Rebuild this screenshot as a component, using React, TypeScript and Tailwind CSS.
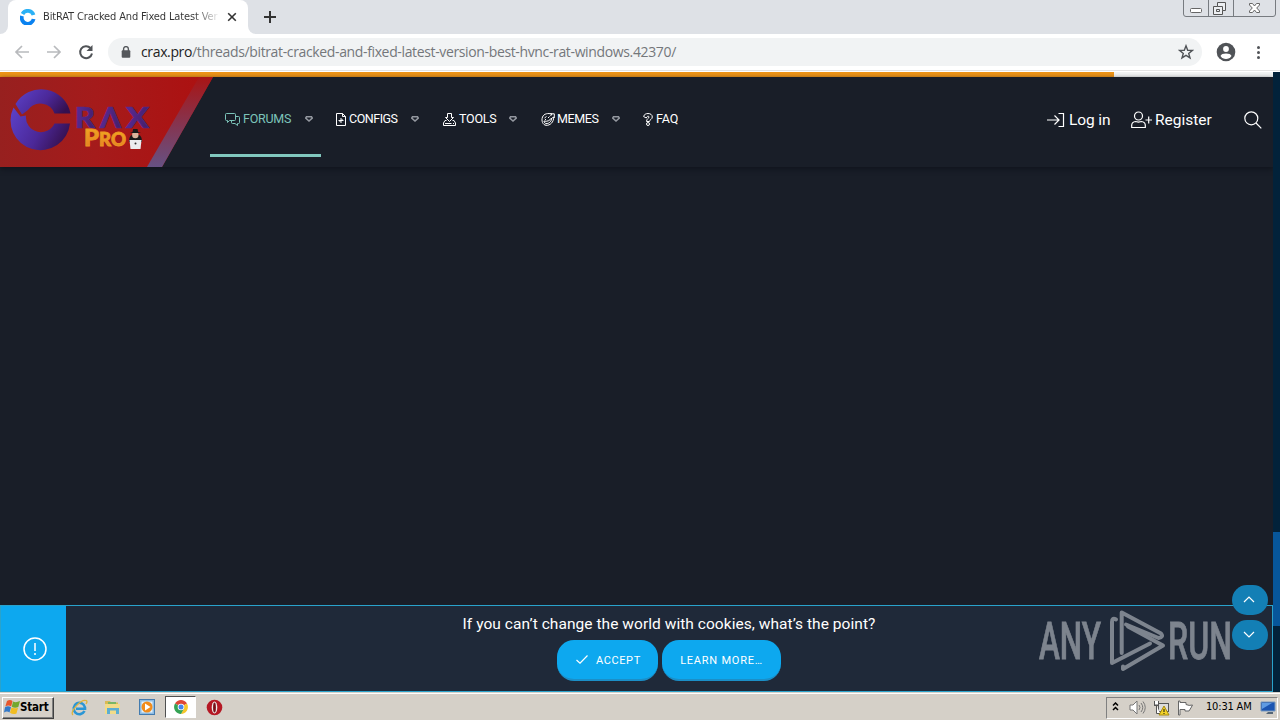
import type { ReactNode } from "react";

const NAV_ICONS: Record<string, ReactNode> = {
  forums: (
    <svg className="shrink-0" width="15" height="13" viewBox="0 0 15 13" fill="none" stroke="currentColor">
      <path d="M4.5 7.5 2.5 9.5V7.5H1.5Q.5 7.5 .5 6.5V1.5Q.5 .5 1.5 .5H9.5Q10.5 .5 10.5 1.5V6.5Q10.5 7.5 9.5 7.5Z" />
      <path d="M10.5 3.500H13.5Q14.5 3.5 14.5 4.500V9.500Q14.5 10.5 13.5 10.500H12.500V12.500L10 10.500H7.500Q6.500 10.500 6.500 9.500V7.500" />
    </svg>
  ),
  configs: (
    <svg className="shrink-0" width="10" height="13" viewBox="0 0 10 13" fill="none" stroke="currentColor">
      <path d="M.5 .5H6.5L9.5 3.500V12.500H.5ZM6.500 .5V3.500H9.500M2.500 7.500H7.500M5 5V10" />
      <path d="M3.500 8.500 6.500 6.500" />
    </svg>
  ),
  tools: (
    <svg className="shrink-0" width="13" height="13" viewBox="0 0 13 13" fill="none" stroke="currentColor">
      <path d="M4.500 .5H8.500V4.500H10.500L6.500 8.500 2.500 4.500H4.500Z" />
      <path d="M3.500 7.500H2L.5 10V12.500H12.500V10L11 7.500H9.500M2 10.500H8.500M10 10.500H11" />
    </svg>
  ),
  memes: (
    <svg className="shrink-0" width="14" height="13" viewBox="0 0 14 13" fill="none" stroke="currentColor">
      <path d="M11 1C7 0 3 .5 1.500 4C0 8 2 12 5 12.300C9 12.800 13 9 12.600 4M11 1 9.500 3M12.600 4 10.500 5.500M9 .8H13.300V5" />
      <path d="M3 8C6 9 9 7.500 10.500 5C11 8 8 11 5 10.500C4 10.300 3 9.500 3 8ZM3.500 5 5.500 3.500M7 5 8.500 3.500M4 6.500H5" />
    </svg>
  ),
  faq: (
    <svg className="shrink-0" width="10" height="13" viewBox="0 0 10 13" fill="none" stroke="currentColor">
      <path d="M.6 3.500C1 1.500 3 .5 5 .5C7.500 .5 9.300 1.800 9.300 4C9.300 6.500 6.500 6.500 6.500 8.500H3.500C3.500 5.500 6 5.500 6 4C6 2.800 4 2.800 3.300 5L.6 3.500Z" />
      <circle cx="5" cy="11" r="1.500" />
    </svg>
  ),
};

const NAV = [
  { id: "forums", label: "FORUMS", item: "w-[111px] text-[#7cc4ba] border-b-3 border-[#81c8be] pt-[7px]", text: "ml-[3px] w-[62px] tracking-[-0.25px]", caret: true },
  { id: "configs", label: "CONFIGS", item: "w-[107px] text-white pt-[4px]", text: "ml-[3px] w-[62px] tracking-[-0.48px]", caret: true },
  { id: "tools", label: "TOOLS", item: "w-[98px] text-white pt-[4px]", text: "ml-[3px] w-[50px] tracking-[-0.25px]", caret: true },
  { id: "memes", label: "MEMES", item: "w-[102px] text-white pt-[4px]", text: "ml-[2px] w-[55px] tracking-[-0.4px]", caret: true },
  { id: "faq", label: "FAQ", item: "w-[60px] text-white pt-[4px]", text: "ml-[3px] tracking-[-0.05px]", caret: false },
];

function Favicon() {
  return (
    <svg width="16" height="16" viewBox="0 0 16 16" fill="none" strokeWidth="3.800">
      <path d="M2.500 5A6 6 0 0 1 13.500 6" stroke="#2bb1f5" />
      <path d="M13.600 10A6 6 0 1 1 2 7" stroke="#0a82f0" />
    </svg>
  );
}

function BrowserChrome() {
  return (
    <div className="h-[72px] w-full shrink-0 bg-white">
      <div className="flex h-[34px] justify-between bg-[#dee1e6]">
        <div className="flex">
          <div className="h-full w-2 bg-white">
            <div className="h-full w-full rounded-br-lg bg-[#dee1e6]" />
          </div>
          <div className="flex h-full w-[240px] items-center rounded-t-lg bg-white pl-3">
            <Favicon />
            <div className="ml-[7px] w-[177px] overflow-hidden whitespace-nowrap bg-gradient-to-r from-[#333] from-85% to-white bg-clip-text font-['DejaVu_Sans_Condensed','DejaVu_Sans',sans-serif] text-[11px] tracking-[-0.14px] text-transparent [font-stretch:condensed]">
              BitRAT Cracked And Fixed Latest Ver
            </div>
            <svg className="ml-[7px]" width="10" height="10" viewBox="0 0 10 10" stroke="#333" strokeWidth="1.600">
              <path d="m1.200 1.200 7.600 7.600m0-7.600L1.200 8.800" />
            </svg>
          </div>
          <div className="h-full w-2 bg-white">
            <div className="h-full w-full rounded-bl-lg bg-[#dee1e6]" />
          </div>
          <svg className="mt-[11px] ml-[8px]" width="12" height="12" stroke="#333" strokeWidth="2">
            <path d="M6 0V12M0 6H12" />
          </svg>
        </div>
        <svg className="mr-[3px]" width="95" height="18" fill="none" stroke="#777b80">
          <path d="M1.500 0V14Q1.500 16.500 4 16.500H91Q93.500 16.500 93.500 14V0M26.500 0V16.500M51.500 0V16.500" />
          <rect x="8.500" y="8.500" width="11" height="4" rx="1" fill="#fff" stroke="#666" />
          <path d="M35.500 2.500H43.500V10.500H40.500V14.500H31.500V6.500H35.500Z" fill="#eceef1" stroke="#555" />
          <path d="M40.500 10.500V6.500H35.500M34.500 9.500H37.500V11.500H34.500Z" stroke="#555" />
          <path d="M67.500 3.500H70.500L72.500 6L74.500 3.500H77.500V5L74.700 8L77.500 11V12.500H74.500L72.500 10L70.500 12.500H67.500V11L70.300 8L67.500 5Z" fill="#fff" stroke="#666" />
        </svg>
      </div>
      <div className="flex h-[37px] items-center border-b border-[#e3e3e3] pl-[14px]">
        <svg width="84" height="18" viewBox="0 0 84 18" fill="none" strokeWidth="1.700">
          <path d="M15 9H2M8 3 2 9l6 6M33 9H46M40 3l6 6-6 6" stroke="#b8babd" />
          <path d="M76.500 5A6 6 0 1 0 78 10.500" stroke="#505357" strokeWidth="2" />
          <path d="M78.500 2V8H72.500Z" fill="#505357" />
        </svg>
        <div className="ml-[10px] flex h-7 w-[1094px] items-center rounded-full bg-[#f1f3f4] pl-[13px]">
          <svg width="10" height="12" viewBox="0 0 10 12" fill="none">
            <rect x=".7" y="4.300" width="8.600" height="7.400" rx="1" fill="#55585c" />
            <path d="M2.600 5V3A2.400 2.400 0 0 1 7.400 3V5" stroke="#55585c" strokeWidth="1.400" />
          </svg>
          <div className="-mt-px ml-[10px] w-[1037px] whitespace-nowrap font-['Open_Sans','Noto_Sans',sans-serif] text-[14px] tracking-[-0.36px] text-[#74777b]">
            <span className="text-[#222]">crax.pro</span>/threads/bitrat-cracked-and-fixed-latest-version-best-hvnc-rat-windows.42370/
          </div>
          <svg width="16" height="16" viewBox="0 0 16 16" fill="none" stroke="#505357" strokeWidth="1.400">
            <path d="m8 1.800 1.700 4.400 4.700.2-3.700 3 1.300 4.500L8 11.300l-4 2.600 1.300-4.500-3.700-3 4.700-.2Z" />
          </svg>
        </div>
        <svg className="ml-[14px]" width="20" height="20" viewBox="0 0 20 20">
          <circle cx="10" cy="10" r="9.300" fill="#505357" />
          <circle cx="10" cy="7" r="2.900" fill="#fff" />
          <path d="M4.500 14C5 10.700 15 10.700 15.500 14A6.500 6.500 0 0 1 4.500 14Z" fill="#fff" />
        </svg>
        <svg className="ml-[20px]" width="6" height="16" fill="#505357">
          <circle cx="2.500" cy="3.500" r="1.500" />
          <circle cx="2.500" cy="8.500" r="1.500" />
          <circle cx="2.500" cy="13.500" r="1.500" />
        </svg>
      </div>
    </div>
  );
}

function CraxLogo() {
  return (
    <svg className="shrink-0" width="210" height="90" viewBox="0 0 210 90" overflow="visible">
      <defs>
        <linearGradient id="red" x1="0" y1="0" x2="1" y2="0">
          <stop offset="0" stopColor="#97201f" />
          <stop offset=".45" stopColor="#a51b1b" />
          <stop offset="1" stopColor="#ad1010" />
        </linearGradient>
        <linearGradient id="band" x1="0" y1="0" x2="0" y2="1">
          <stop offset="0" stopColor="#a81515" />
          <stop offset=".5" stopColor="#87334d" />
          <stop offset="1" stopColor="#665183" />
        </linearGradient>
        <linearGradient id="ring" x1="0" y1=".2" x2="1" y2=".6">
          <stop offset="0" stopColor="#5a3fc4" />
          <stop offset=".55" stopColor="#4b2898" />
          <stop offset="1" stopColor="#35104f" />
        </linearGradient>
        <linearGradient id="purple" x1="0" y1="0" x2="1" y2=".3">
          <stop offset="0" stopColor="#5c2d9d" />
          <stop offset="1" stopColor="#46206d" />
        </linearGradient>
        <linearGradient id="gold" x1="0" y1="0" x2="0" y2="1">
          <stop offset="0" stopColor="#f3af20" />
          <stop offset="1" stopColor="#e37925" />
        </linearGradient>
      </defs>
      <path d="M0 0H213L162 90H0Z" fill="url(#red)" />
      <path d="M199 0H213L162 90H147Z" fill="url(#band)" />
      <path d="M15.500 27A29.800 29.800 0 0 1 70.500 36.500H54.500A15 15 0 0 0 28 33L22 37.500Z" fill="url(#ring)" />
      <path d="M13.500 30.500 20.500 39.500 26 38.500A15 15 0 0 0 54.500 46.500H70A29.800 29.800 0 1 1 13.500 30.500Z" fill="url(#ring)" />
      <g fontFamily="Lato, sans-serif" fontWeight="900">
        <g fill="url(#purple)" stroke="#52288a" strokeWidth=".7" fontSize="29">
          <text x="75" y="51" textLength="20" lengthAdjust="spacingAndGlyphs">R</text>
          <text x="100" y="51" textLength="21" lengthAdjust="spacingAndGlyphs">Λ</text>
          <text x="126" y="51" textLength="23" lengthAdjust="spacingAndGlyphs">X</text>
        </g>
        <g fill="url(#gold)" stroke="#ec9722" strokeWidth=".8">
          <text x="84" y="69" fontSize="23" textLength="15" lengthAdjust="spacingAndGlyphs">P</text>
          <text x="99" y="69" fontSize="18" textLength="27" lengthAdjust="spacingAndGlyphs">RO</text>
        </g>
      </g>
      <path d="M129 65Q129 59 132 58H139Q142 59 142 65Z" fill="#191919" />
      <circle cx="135.300" cy="58" r="3.200" fill="#d9b39b" />
      <path d="M130 56 132.500 55 133.200 52H137.500L138.200 55 141 56Z" fill="#191919" />
      <path d="M129.500 63H141.500L140.500 72H130.500Z" fill="#ececef" />
      <circle cx="135.500" cy="66.500" r="1" fill="#333" />
    </svg>
  );
}

function SiteHeader() {
  return (
    <header className="flex h-[90px] bg-[#191e28] shadow-[0_2px_5px_#10141c] font-[Roboto,sans-serif]">
      <CraxLogo />
      <nav className="z-10 flex h-[80px] text-[12.5px]">
        {NAV.map((n) => (
          <div key={n.id} className={`flex items-center pl-[15px] ${n.item}`}>
            {NAV_ICONS[n.id]}
            <span className={`shrink-0 whitespace-nowrap ${n.text}`}>{n.label}</span>
            {n.caret && (
              <svg className="-mt-px shrink-0 text-[#9498a0]" width="8" height="6" viewBox="0 0 8 6" fill="none" stroke="currentColor" strokeWidth="1.500">
                <path d="M1.500 .8H6.500L7.300 2 4 5 .7 2Z" />
              </svg>
            )}
          </div>
        ))}
      </nav>
      <div className="ml-auto flex items-center pr-[11px] pb-[5px] text-[15.500px] text-white">
        <svg width="18" height="16" fill="none" stroke="currentColor" strokeWidth="1.200">
          <path d="M0 8H12M7.500 3.500 12 8 7.500 12.500M11.500 1.500H16.500V14.500H11.500" />
        </svg>
        <span className="mt-[2px] ml-1 w-[62px] whitespace-nowrap tracking-[-0.1px]">Log in</span>
        <svg width="22" height="18" fill="none" stroke="currentColor" strokeWidth="1.200">
          <circle cx="7.500" cy="5" r="4" />
          <path d="M.7 16.500V14Q1 11 4.500 10.500L7.500 11.200 10.500 10.500Q14 11 14.300 14V16.500ZM14.500 9H21M17.700 5.500V12.500" />
        </svg>
        <span className="mt-[2px] ml-[2px] w-[89px] whitespace-nowrap">Register</span>
        <svg width="18" height="18" fill="none" stroke="currentColor" strokeWidth="1.200">
          <circle cx="7.300" cy="7.300" r="6.500" />
          <path d="m12 12 5.300 5.300" />
        </svg>
      </div>
    </header>
  );
}

function CookieNotice() {
  return (
    <div className="mt-auto flex h-[87px] border border-[#29a3cc] bg-[#1f2939] font-[Roboto,sans-serif] text-white">
      <div className="flex w-[65px] items-center justify-center bg-[#0da8ef]">
        <svg className="ml-[2px]" width="24" height="24" fill="none" stroke="white" strokeWidth="1.500">
          <circle cx="12" cy="12" r="11" />
          <path d="M12 6V14M12 16V18" strokeWidth="1.500" />
        </svg>
      </div>
      <div className="flex flex-1 flex-col items-center pt-[8px]">
        <div className="h-[26px] whitespace-nowrap text-[15.500px] leading-[20px] tracking-[0.05px]">If you can’t change the world with cookies, what’s the point?</div>
        <div className="flex gap-1 text-[11px]">
          <button className="flex h-[41px] w-[101px] items-center rounded-[17px] border-b-2 border-[#1b8fc8] bg-[#0da8ef] pl-[19px]">
            <svg width="12" height="9" fill="none" stroke="white" strokeWidth="1.200">
              <path d="m.5 5 3.500 3.200L11.500 .5" />
            </svg>
            <span className="mt-[3px] ml-2 tracking-[0.6px]">ACCEPT</span>
          </button>
          <button className="flex h-[41px] w-[119px] items-center justify-center rounded-[17px] border-b-2 border-[#1b8fc8] bg-[#0da8ef] pt-[3px] whitespace-nowrap tracking-[0.76px]">LEARN MORE…</button>
        </div>
      </div>
    </div>
  );
}

function Watermark() {
  return (
    <svg className="absolute top-[536px] left-[1036px]" width="200" height="66" fill="#8b919a" opacity=".88">
      <g fontFamily="Roboto, sans-serif" fontSize="52" fontWeight="500" stroke="#8b919a" strokeWidth=".8">
        <text x="3" y="51" textLength="62" lengthAdjust="spacingAndGlyphs">ANY</text>
        <text x="132" y="51" textLength="64" lengthAdjust="spacingAndGlyphs">RUN</text>
      </g>
      <g fill="none" stroke="#8b919a" strokeWidth="4" strokeLinecap="round" strokeLinejoin="round">
        <path d="M85.700 45V4.500L125 25.500Q128 29 122.500 30L90 16.500" />
        <path d="M80 11.500Q76 9 76 14V55L114 35.500" />
        <path d="M92 18.500 127 37.500 87 61V58.500" />
      </g>
    </svg>
  );
}

function WebPage() {
  return (
    <div className="relative flex h-[620px] w-full">
      <main className="flex w-[1273px] flex-col bg-[#191e28]">
        <div className="h-[5px] shrink-0 bg-[#f1f3f3]">
          <div className="h-full w-[1114px] bg-[#ed9418]" />
        </div>
        <SiteHeader />
        <CookieNotice />
      </main>
      <div className="flex w-[7px] flex-col bg-[#02223a] pt-[460px]">
        <div className="h-[94px] bg-[#07569a]" />
      </div>
      <Watermark />
      <div className="absolute top-[513px] left-[1232px] flex flex-col gap-[5px]">
        {["m1 7 5-5 5 5", "m1 2 5 5 5-5"].map((d) => (
          <div key={d} className="flex h-[30px] w-[36px] items-center justify-center rounded-[15px] bg-[#137fb5]">
            <svg className="-mt-0.5 -ml-0.5" width="12" height="9" fill="none" stroke="white" strokeWidth="1.200">
              <path d={d} />
            </svg>
          </div>
        ))}
      </div>
    </div>
  );
}

function Taskbar() {
  return (
    <div className="flex h-7 items-center border-t border-[#d5d1c9] bg-[#d5d0c8] pl-[2px] font-['DejaVu_Sans_Condensed','DejaVu_Sans',sans-serif] text-black shadow-[inset_0_1px_0_#fff]">
      <div className="mt-[2px] flex h-[22px] w-[52px] items-center border border-t-white border-r-[#404040] border-b-[#404040] border-l-white pl-px shadow-[inset_-1px_-1px_0_#808080]">
        <svg className="-mt-px shrink-0" width="16" height="16" viewBox="0 0 16 16">
          <path d="M3 2Q6 0 8.500 2L7.200 7.500Q4.500 5.500 1.300 7.500Z" fill="#e7562b" />
          <path d="M9 2.500Q12 4 16 2L14.300 8Q11 9.500 7.800 7.800Z" fill="#74a82e" />
          <path d="M1 8.200Q4 6.500 7 8.200L5.500 13.500Q3 11.500 0 13.500Z" fill="#3379c8" />
          <path d="M7.500 8.500Q11 10 14 8.700L12.500 14.500Q9 16 6 13.800Z" fill="#f1bd22" />
        </svg>
        <span className="text-[11.500px] font-bold tracking-[-0.2px] [font-stretch:condensed]">Start</span>
      </div>
      <svg className="mt-[2px] ml-[16px] h-[18px] w-[18px]" viewBox="0 0 18 18" fill="none">
        <path d="M14.500 12A5.700 5.700 0 1 1 15 8.500V9.700H6" stroke="#2b96d5" strokeWidth="2.600" />
        <path d="M3 16C-1 13 11 0 16 1.500Q18 2 16 5" stroke="#dfb33b" strokeWidth="1.300" />
      </svg>
      <svg className="mt-[2px] ml-[16px] h-[17px] w-[17px]" viewBox="0 0 17 17">
        <path d="M1 2H6L7 3.500H14V7H1Z" fill="#d9ba55" />
        <path d="M1 5H16L15 15H1Z" fill="#f2db88" />
        <path d="M3 9H15V15H12V11.500H6V15H3Z" fill="#5cadd2" />
        <path d="M4 3H12V5H4Z" fill="#79b665" />
      </svg>
      <svg className="mt-px ml-[17px]" width="18" height="18">
        <rect x="1.500" y="1.500" width="15" height="15" fill="#8dbce4" stroke="#437baf" />
        <rect x="3.500" y="3.500" width="11" height="11" fill="#e5f1fa" />
        <circle cx="9" cy="9" r="5.500" fill="#f18c1c" />
        <path d="M7 5.500 12.500 9 7 12.500Z" fill="white" />
      </svg>
      <div className="mt-[1px] ml-[9px] flex h-[22px] w-[31px] items-center justify-center border border-t-[#505050] border-r-white border-b-white border-l-[#505050] bg-white">
        <svg width="14" height="14" viewBox="0 0 14 14">
          <path d="M7 7 1 3.500A7 7 0 0 1 13 3.500Z" fill="#de4636" />
          <path d="M7 7 13 3.500A7 7 0 0 1 7 14L9.800 8.500 7 3.500Z" fill="#f6c62b" />
          <path d="M7 7 1 3.500A7 7 0 0 0 7 14L10 8.500Z" fill="#35a354" />
          <circle cx="7" cy="7" r="3.300" fill="white" />
          <circle cx="7" cy="7" r="2.500" fill="#4484ed" />
        </svg>
      </div>
      <svg className="mt-[2px] ml-[10px]" width="17" height="17">
        <circle cx="8.500" cy="8.500" r="7.800" fill="#b51824" />
        <ellipse cx="8.500" cy="8.500" rx="2.800" ry="6" fill="#eee" />
        <ellipse cx="8.500" cy="8.500" rx="1.400" ry="5" fill="#791018" />
      </svg>
      <div className="mt-[2px] mr-[2px] ml-auto flex h-[22px] w-[172px] items-center border border-t-[#808080] border-r-white border-b-white border-l-[#808080] pl-[5px]">
        <svg className="-mt-[3px]" width="7" height="9" fill="none" stroke="black" strokeWidth="1.500">
          <path d="M1 3.500 3.500 1 6 3.500M1 8 3.500 5.500 6 8" />
        </svg>
        <svg className="ml-[10px]" width="17" height="15" fill="none" stroke="#777">
          <path d="M1 5H4L8 1V14L4 10H1Z" fill="#fff" />
          <path d="M10 5Q12 7.500 10 10M12 3Q15.500 7.500 12 12M14 1.500Q18.500 7.500 14 13.500" />
        </svg>
        <svg className="ml-[7px]" width="17" height="16" fill="none" stroke="#555">
          <rect x="5.500" y="3.500" width="10" height="8" fill="#dcdcdc" />
          <path d="M1.500 1V5H5.500V1M3.500 5V13.500H7M1 5.500H6" fill="#fff" />
          <path d="M11 6 16 15H6Z" fill="#f4d328" stroke="#a78a10" />
          <path d="M11 9V12M11 13V14" stroke="#111" />
        </svg>
        <svg className="ml-[7px]" width="17" height="16" fill="#fff" stroke="#666">
          <path d="M1.500 1V15H3V9.500H8V11H12Q14 8 15.500 5Q12 6 9 4.500V2.500H3V1Z" />
        </svg>
        <span className="ml-[12px] w-[54px] whitespace-nowrap text-[11px] tracking-[-0.18px] [font-stretch:condensed]">10:31 AM</span>
        <svg width="16" height="14">
          <path d="M1 1H15V10H1Z" fill="#1b54b1" stroke="#7798bd" />
          <path d="M2 2H12L2 8Z" fill="#5f9be3" />
          <path d="M8 11H13V13H6Z" fill="#567" />
        </svg>
      </div>
    </div>
  );
}

export default function App() {
  return (
    <div className="h-[720px] w-[1280px] overflow-hidden bg-[#191e28]">
      <BrowserChrome />
      <WebPage />
      <Taskbar />
    </div>
  );
}
